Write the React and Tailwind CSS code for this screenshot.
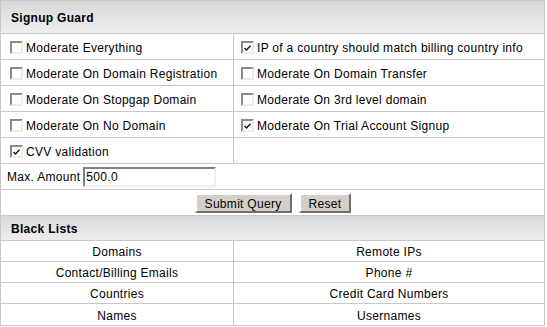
import React from 'react';

const font = { fontFamily: '"Liberation Sans", Arial, sans-serif', letterSpacing: '0.3px' };

const Box = ({ checked }) => (
  <span className="inline-flex items-center justify-center w-[13px] h-[13px] shrink-0 ml-[5px] mr-[3px] border-2 border-t-[#8a8a8a] border-l-[#8a8a8a] border-b-[#ececec] border-r-[#ececec] bg-white">
    {checked && (
      <svg width="7" height="6" viewBox="0 0 7 6">
        <path d="M0.5 3 L2.5 5 L6.5 0.8" fill="none" stroke="#111" strokeWidth="1.4" />
      </svg>
    )}
  </span>
);

const Check = ({ label, checked }) => (
  <div className="flex items-center h-full pt-[2px]">
    <Box checked={checked} />
    <span>{label}</span>
  </div>
);

const rows = [
  [['Moderate Everything', false], ['IP of a country should match billing country info', true]],
  [['Moderate On Domain Registration', false], ['Moderate On Domain Transfer', false]],
  [['Moderate On Stopgap Domain', false], ['Moderate On 3rd level domain', false]],
  [['Moderate On No Domain', false], ['Moderate On Trial Account Signup', true]],
  [['CVV validation', true], null],
];

const lists = [
  ['Domains', 'Remote IPs'],
  ['Contact/Billing Emails', 'Phone #'],
  ['Countries', 'Credit Card Numbers'],
  ['Names', 'Usernames'],
];

const Head = ({ title, h }) => (
  <div className={`${h} flex items-center pl-[10px] pt-[1px] font-bold bg-gradient-to-b from-[#d6d6d6] via-[#e4e4e4] to-[#ededed] border-b border-[#c8c8c8]`}>
    {title}
  </div>
);

const btn =
  'h-[20px] px-[8px] bg-[#d4d0c8] border-2 border-t-white border-l-white border-b-[#6e6e6e] border-r-[#6e6e6e]';

export default function App() {
  return (
    <div className="bg-white w-[547px] h-[327px]" style={font}>
      <div className="w-[545px] border border-[#c8c8c8] text-[12px] text-black">
        <Head title="Signup Guard" h="h-[33px]" />
        {rows.map((r, i) => (
          <div key={i} className="grid grid-cols-[233px_1fr] h-[26px] border-b border-[#c8c8c8]">
            <div className="border-r border-[#c8c8c8] pl-[4px]">
              <Check label={r[0][0]} checked={r[0][1]} />
            </div>
            <div className="pl-[2px]">{r[1] && <Check label={r[1][0]} checked={r[1][1]} />}</div>
          </div>
        ))}
        <div className="h-[26px] flex items-center pl-[6px] pt-[1px] border-b border-[#c8c8c8]">
          <span className="mr-[3px]">Max. Amount</span>
          <input
            defaultValue="500.0"
            className="w-[133px] h-[20px] px-[1px] bg-white border-2 border-t-[#808080] border-l-[#808080] border-b-[#eeeeee] border-r-[#eeeeee] outline-none text-[12px]"
            style={font}
          />
        </div>
        <div className="h-[26px] flex items-center justify-center gap-[7px] border-b border-[#c8c8c8] pl-[1px] pt-[1px]">
          <button className={btn}>Submit Query</button>
          <button className={btn}>Reset</button>
        </div>
        <Head title="Black Lists" h="h-[25px]" />
        {lists.map((l, i) => (
          <div key={i} className={`grid grid-cols-[233px_1fr] h-[21px] ${i < lists.length - 1 ? 'border-b border-[#c8c8c8]' : ''}`}>
            <div className="border-r border-[#c8c8c8] pt-[2px] flex items-center justify-center">{l[0]}</div>
            <div className="pt-[2px] flex items-center justify-center">{l[1]}</div>
          </div>
        ))}
      </div>
    </div>
  );
}
